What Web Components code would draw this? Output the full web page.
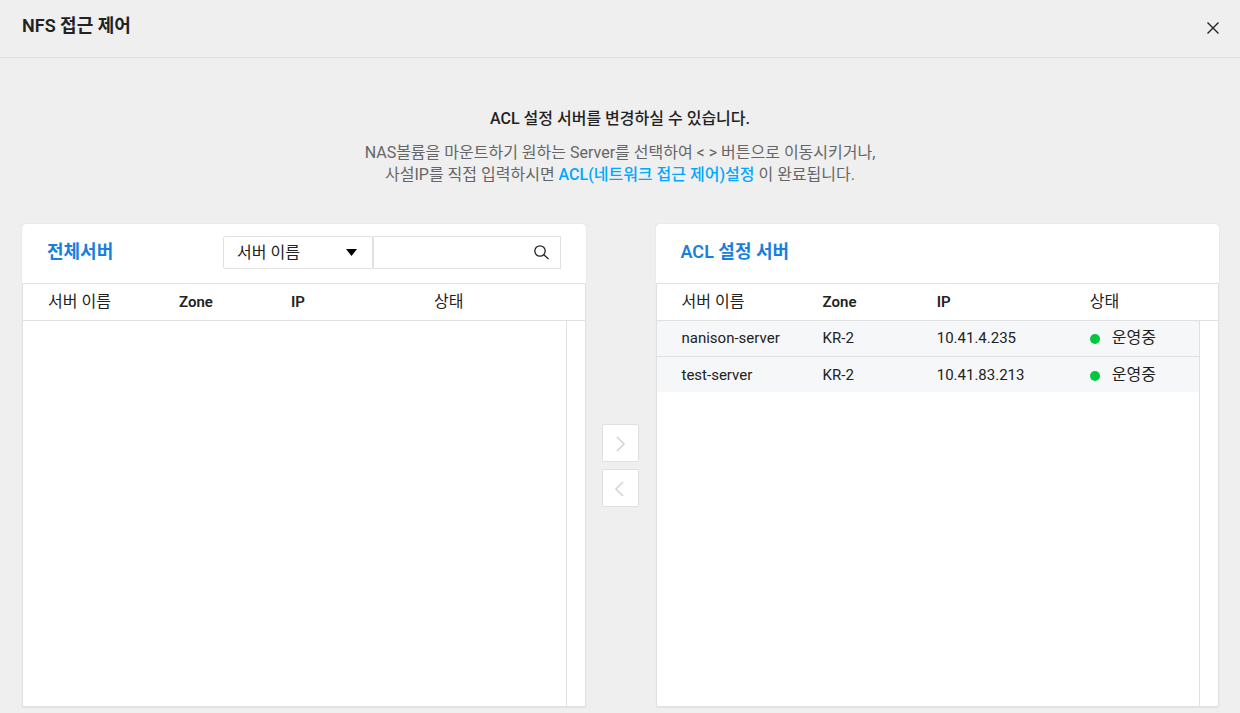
<!DOCTYPE html>
<html lang="ko">
<head>
<meta charset="utf-8">
<meta name="viewport" content="width=device-width, initial-scale=1">
<title>NFS 접근 제어</title>
<style>
  :root { --line: #e0e0e0; --ink: #222; --blue: #1a7fdc; }
  body { margin: 0; background: #efefef; color: var(--ink); font: 15px/22px Roboto, "Noto Sans CJK KR", sans-serif; }
</style>
</head>
<body>
<nfs-access-dialog></nfs-access-dialog>
<script>
class Base extends HTMLElement {
  connectedCallback() {
    if (this.shadowRoot) return;
    this.attachShadow({ mode: 'open' }).innerHTML = this.render();
  }
}

customElements.define('dialog-header', class extends Base {
  render() {
    return `<style>
      :host { display: block; border-bottom: 1px solid var(--line); }
      header { display: flex; justify-content: space-between; align-items: flex-start; padding: 13px 20px 18px 22px; }
      h1 { margin: 0; font-size: 18px; line-height: 26px; font-weight: 600; }
      button { border: 0; padding: 0; margin-top: 8px; background: none; color: var(--ink); display: flex; cursor: pointer; }
    </style>
    <header><h1><slot></slot></h1>
      <button type="button" aria-label="닫기"><svg width="14" height="14" viewBox="0 0 14 14" fill="none" stroke="currentColor" stroke-width="1.4"><path d="M1.5 1.5l11 11M12.5 1.5l-11 11"/></svg></button>
    </header>`;
  }
});

customElements.define('dialog-intro', class extends Base {
  render() {
    return `<style>
      :host { display: block; text-align: center; color: #666; font-size: 16px; }
      h2 { margin: 0 0 12px; font-size: 16px; line-height: 22px; font-weight: 500; color: var(--ink); }
      p { margin: 0; }
    </style>
    <h2><slot name="title"></slot></h2><p><slot></slot></p>`;
  }
});

customElements.define('server-search', class extends Base {
  render() {
    return `<style>
      :host { display: block; }
      form { display: flex; }
      .field { position: relative; box-sizing: border-box; height: 33px; border: 1px solid var(--line); background: #fff; }
      .kind { width: 150px; border-radius: 2px; }
      .query { width: 188px; }
      select, input { box-sizing: border-box; width: 100%; height: 100%; border: 0; margin: 0; background: none; font: inherit; font-size: 16px; color: inherit; appearance: none; outline-offset: -1px; }
      select { padding: 0 32px 0 13px; }
      input { padding: 0 36px 0 12px; }
      .kind svg { position: absolute; right: 15px; top: 12px; pointer-events: none; }
      button { position: absolute; right: 10px; top: 7px; padding: 0; border: 0; background: none; color: var(--ink); display: flex; cursor: pointer; }
    </style>
    <form>
      <div class="field kind"><select aria-label="검색 조건"><option>서버 이름</option></select>
        <svg width="11" height="7" viewBox="0 0 11 7"><path d="M0 0h11L5.5 7z"/></svg></div>
      <div class="field query"><input type="text" aria-label="검색어">
        <button type="button" aria-label="검색"><svg width="17" height="17" viewBox="0 0 17 17" fill="none" stroke="currentColor" stroke-width="1.3"><circle cx="7" cy="7" r="5.2"/><path d="M10.8 10.8l4.7 4.2"/></svg></button></div>
    </form>`;
  }
});

customElements.define('server-table', class extends Base {
  render() {
    const rows = JSON.parse(this.getAttribute('rows') || '[]');
    const cols = this.getAttribute('cols').split(' ');
    const gutter = `<td class="gutter" rowspan="${rows.length + 1}"></td>`;
    return `<style>
      :host { display: grid; margin: 0 1px 1px; background: #fff; box-shadow: 0 0 0 1px var(--line), 0 1px 2px #0002; }
      table { width: 100%; height: 100%; table-layout: fixed; border-collapse: separate; border-spacing: 0; }
      th, td { padding: 0 0 0 25px; text-align: left; white-space: nowrap; }
      th { height: 36px; font-weight: 600; border-bottom: 1px solid var(--line); }
      th.ko { font-size: 16px; font-weight: 400; }
      td { height: 33px; padding-bottom: 2px; font-weight: 400; background: #f5f7f9; }
      tr + tr td { height: 35px; padding-bottom: 0; border-top: 1px solid var(--line); }
      tr.fill td { height: auto; background: none; border-top: 0; }
      td.gutter { padding: 0; background: #fff; border-left: 1px solid var(--line); }
      .state { display: flex; align-items: center; gap: 12px; font-size: 16px; }
      .state::before { content: ""; width: 10px; height: 10px; margin-top: 2px; border-radius: 50%; background: #00c73c; }
    </style>
    <table>
      <colgroup>${cols.map(w => `<col style="width:${w}px">`).join('')}</colgroup>
      <thead><tr><th class="ko">서버 이름</th><th>Zone</th><th>IP</th><th class="ko" colspan="2">상태</th></tr></thead>
      <tbody>${rows.map((r, i) => `<tr><td>${r[0]}</td><td>${r[1]}</td><td>${r[2]}</td><td><div class="state">${r[3]}</div></td>${i ? '' : gutter}</tr>`).join('')}
      <tr class="fill"><td colspan="4"></td>${rows.length ? '' : gutter}</tr></tbody>
    </table>`;
  }
});

customElements.define('server-panel', class extends Base {
  render() {
    return `<style>
      :host { display: grid; grid-template-rows: auto 1fr; min-width: 0; }
      header { display: flex; justify-content: space-between; align-items: flex-start; box-sizing: border-box; min-height: 59px; padding: 12px 25px 0; background: #fff; border-radius: 4px 4px 0 0; box-shadow: 0 0 1px #0003; }
      h3 { margin: 3px 0 0; font-size: 18px; line-height: 26px; font-weight: 600; color: var(--blue); }
      .body { display: grid; padding-top: 1px; }
    </style>
    <header><h3><slot name="title"></slot></h3><slot name="tools"></slot></header>
    <div class="body"><slot></slot></div>`;
  }
});

customElements.define('transfer-buttons', class extends Base {
  render() {
    return `<style>
      :host { display: flex; flex-direction: column; justify-content: center; align-items: center; gap: 7px; }
      button { width: 37px; height: 38px; padding: 0; display: grid; place-items: center; border: 1px solid var(--line); border-radius: 2px; background: #fff; color: #d4d4d8; cursor: pointer; }
    </style>
    <button type="button" aria-label="추가"><svg width="16" height="16" viewBox="0 0 16 16" fill="none" stroke="currentColor" stroke-width="1.6"><path d="M4 2l7 7-7 7"/></svg></button>
    <button type="button" aria-label="제거"><svg width="16" height="16" viewBox="0 0 16 16" fill="none" stroke="currentColor" stroke-width="1.6"><path d="M10 2L3 9l7 7"/></svg></button>`;
  }
});

customElements.define('nfs-access-dialog', class extends Base {
  render() {
    return `<style>
      :host { display: flex; flex-direction: column; min-height: 100vh; }
      dialog-intro { margin: 50px 0 38px; }
      main { flex: 1; display: grid; grid-template-columns: 1fr 70px 1fr; margin: 0 21px 6px 22px; }
      a { color: #00a9ff; font-weight: 500; text-decoration: none; }
    </style>
    <dialog-header>NFS 접근 제어</dialog-header>
    <dialog-intro><span slot="title">ACL 설정 서버를 변경하실 수 있습니다.</span>NAS볼륨을 마운트하기 원하는 Server를 선택하여 &lt; &gt; 버튼으로 이동시키거나,<br>사설IP를 직접 입력하시면 <a href="#acl">ACL(네트워크 접근 제어)설정</a> 이 완료됩니다.</dialog-intro>
    <main>
      <server-panel><span slot="title">전체서버</span><server-search slot="tools"></server-search>
        <server-table cols="131 112 143 157 19"></server-table></server-panel>
      <transfer-buttons></transfer-buttons>
      <server-panel><span slot="title">ACL 설정 서버</span>
        <server-table cols="141 114 153 134 19" rows='[["nanison-server","KR-2","10.41.4.235","운영중"],["test-server","KR-2","10.41.83.213","운영중"]]'></server-table></server-panel>
    </main>`;
  }
});
</script>
</body>
</html>
